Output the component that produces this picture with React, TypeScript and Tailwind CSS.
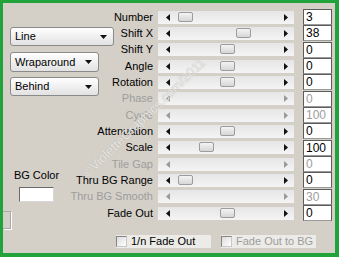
import React from "react";

type Row = {
  label: string;
  value: string;
  thumb?: number;
  disabled?: boolean;
};

const rows: Row[] = [
  { label: "Number", value: "3", thumb: 20 },
  { label: "Shift X", value: "38", thumb: 78 },
  { label: "Shift Y", value: "0", thumb: 62 },
  { label: "Angle", value: "0", thumb: 62 },
  { label: "Rotation", value: "0", thumb: 62 },
  { label: "Phase", value: "0", disabled: true },
  { label: "Cycle", value: "100", disabled: true },
  { label: "Attenuation", value: "0", thumb: 62 },
  { label: "Scale", value: "100", thumb: 41 },
  { label: "Tile Gap", value: "0", disabled: true },
  { label: "Thru BG Range", value: "0", thumb: 20 },
  { label: "Thru BG Smooth", value: "30", disabled: true },
  { label: "Fade Out", value: "0", thumb: 62 },
];

const Arrow = ({ dir, disabled }: { dir: "l" | "r"; disabled?: boolean }) => (
  <svg width="4" height="7" viewBox="0 0 4 7" className="shrink-0">
    <path
      d={dir === "l" ? "M4 0 L0 3.5 L4 7 Z" : "M0 0 L4 3.5 L0 7 Z"}
      fill={disabled ? "#9a9a9a" : "#111"}
    />
  </svg>
);

const Slider = ({ thumb, disabled }: { thumb?: number; disabled?: boolean }) => (
  <div className="relative w-[136px] h-[13px] bg-gradient-to-b from-[#e6e6e6] to-[#f4f4f4] flex items-center justify-between pl-[8px] pr-[6px]">
    <Arrow dir="l" disabled={disabled} />
    <Arrow dir="r" disabled={disabled} />
    {thumb !== undefined && (
      <div
        className="absolute top-[1px] w-[15px] h-[10px] rounded-[2px] border border-[#9c9c9c] bg-gradient-to-b from-[#f4f4f4] to-[#d6d6d6]"
        style={{ left: thumb }}
      />
    )}
  </div>
);

const Dropdown = ({ text, w, h }: { text: string; w: string; h: string }) => (
  <div
    className={`${w} ${h} ml-[7px] flex items-center justify-between pl-[4px] pr-[6px] rounded-[3px] border border-[#8a8a8a] bg-gradient-to-b from-white to-[#e2e2e2] text-[11px] text-black shadow-[inset_0_1px_0_#fff]`}
  >
    <span>{text}</span>
    <svg width="7" height="4" viewBox="0 0 7 4">
      <path d="M0 0 L7 0 L3.5 4 Z" fill="#111" />
    </svg>
  </div>
);

const Check = ({ label, disabled }: { label: string; disabled?: boolean }) => (
  <div className="w-[95px] h-[13px] flex items-center gap-[4px] bg-[#ecebe8]">
    <div className="w-[11px] h-[11px] border border-[#858585] border-r-[#c8c8c8] border-b-[#c8c8c8] bg-gradient-to-br from-[#dcdcdc] to-white" />
    <span className={`text-[11px] leading-none ${disabled ? "text-[#9d9d9d]" : "text-black"}`}>
      {label}
    </span>
  </div>
);

export default function App() {
  return (
    <div
      className="w-[339px] h-[257px] bg-[#d4d0c8] border-[#1fa33a] border-t-[3px] border-l-[3px] border-r-[4px] border-b-[4px] overflow-hidden relative font-normal"
      style={{ fontFamily: '"Liberation Sans", Arial, sans-serif' }}
    >
      <div className="grid">
        <div className="col-start-1 row-start-1 flex flex-col pt-[6px]">
          {rows.map((r) => (
            <div key={r.label} className="h-[16.33px] flex items-center">
              <div
                className={`w-[150px] text-right text-[11px] leading-none ${r.disabled ? "text-[#9d9d9d]" : "text-black"}`}
              >
                {r.label}
              </div>
              <div className="ml-[5px]">
                <Slider thumb={r.thumb} disabled={r.disabled} />
              </div>
              <div
                className={`ml-[9px] w-[29px] h-[16px] flex items-center pl-[2px] bg-white border border-[#5c5c5c] border-b-[#9a9a9a] text-[12px] leading-none ${r.disabled ? "text-[#9d9d9d]" : "text-black"}`}
              >
                {r.value}
              </div>
            </div>
          ))}
        </div>

        <div className="col-start-1 row-start-1 self-start w-fit flex flex-col">
          <div className="mt-[24px]">
            <Dropdown text="Line" w="w-[104px]" h="h-[19px]" />
          </div>
          <div className="mt-[6px]">
            <Dropdown text="Wraparound" w="w-[89px]" h="h-[20px]" />
          </div>
          <div className="mt-[5px]">
            <Dropdown text="Behind" w="w-[89px]" h="h-[19px]" />
          </div>
          <div className="mt-[73px] ml-[16px] w-[35px] flex flex-col items-center">
            <span className="text-[11px] leading-[13px] whitespace-nowrap text-black">BG Color</span>
            <div className="mt-[5px] w-[35px] h-[15px] bg-white border border-[#6a6a6a] border-r-[#d8d8d8] border-b-[#d8d8d8]" />
          </div>
          <div className="mt-[9px] w-[8px] h-[18px] border-y border-r border-[#a8a8a8] shadow-[1px_1px_0_#fff]" />
        </div>
      </div>

      <div className="mt-[6px] ml-[113px] flex gap-[10px]">
        <Check label="1/n Fade Out" />
        <Check label="Fade Out to BG" disabled />
      </div>

      {/* watermark */}
      <span className="absolute left-[46px] top-[105px] w-[190px] text-center text-[13px] text-white/70 [text-shadow:0_0_1px_#a8a49c] rotate-[-44deg] whitespace-nowrap pointer-events-none">
        ©VioletteGraphics.com/2011
      </span>
    </div>
  );
}
